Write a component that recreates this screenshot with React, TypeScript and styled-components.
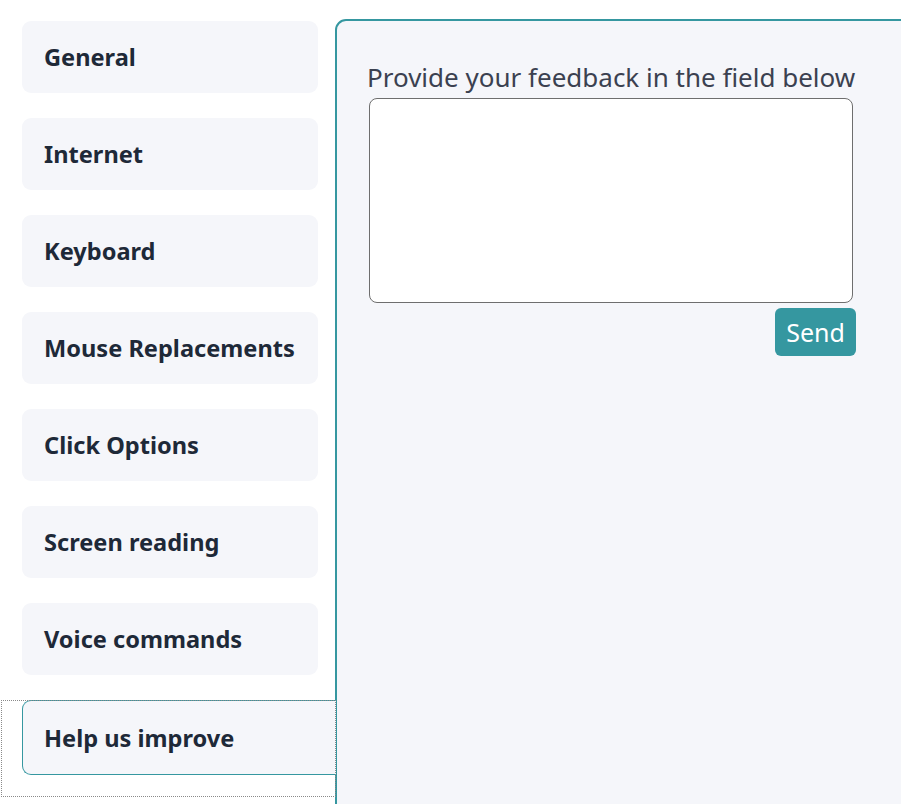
import React from "react";
import styled, { createGlobalStyle } from "styled-components";

const Global = createGlobalStyle`
  html, body { margin: 0; padding: 0; background: #ffffff; overflow: hidden; }
  body { font-family: "Noto Sans", "Open Sans", sans-serif; }
`;

const Page = styled.div`
  display: flex;
  align-items: flex-start;
  width: 901px;
  height: 804px;
  overflow: hidden;
`;

const Sidebar = styled.nav`
  display: flex;
  flex-direction: column;
  width: 335px;
  flex: 0 0 335px;
  padding: 21px 0 0 1px;
  position: relative;
  z-index: 1;
`;

const Item = styled.div<{ $active?: boolean }>`
  display: flex;
  padding: 0 ${(p) => (p.$active ? "0" : "18px")} ${(p) => (p.$active ? "22px" : "25px")} 21px;
  outline: ${(p) => (p.$active ? "1px dotted #8a8a8a" : "none")};
  outline-offset: -1px;
`;

const Tab = styled.button<{ $active?: boolean }>`
  flex: 1;
  height: ${(p) => (p.$active ? "75px" : "72px")};
  display: flex;
  align-items: center;
  padding: 0 0 0 21px;
  margin: 0;
  text-align: left;
  font-family: "Noto Sans", "Open Sans", sans-serif;
  font-weight: 700;
  font-size: 23.6px;
  color: #1e2938;
  background: #f5f6fa;
  border: 1px solid ${(p) => (p.$active ? "#3597a0" : "transparent")};
  border-right: ${(p) => (p.$active ? "none" : "1px solid transparent")};
  border-radius: ${(p) => (p.$active ? "9px 0 0 9px" : "9px")};
  cursor: pointer;
`;

const Panel = styled.section`
  flex: 1;
  margin: 19px -20px 0 -1px;
  height: 820px;
  background: #f5f6fa;
  border: 2px solid #3597a0;
  border-radius: 11px 0 0 0;
  padding: 40px 0 0 30px;
  box-sizing: border-box;
`;

const Content = styled.div`
  width: 489px;
  display: flex;
  flex-direction: column;
`;

const Label = styled.label`
  font-size: 26px;
  color: #3b4150;
  line-height: 33px;
  white-space: nowrap;
`;

const Area = styled.textarea`
  margin: 4px 3px 0 2px;
  height: 205px;
  box-sizing: border-box;
  background: #ffffff;
  border: 1px solid #6e6e6e;
  border-radius: 8px;
  resize: none;
  font-family: inherit;
`;

const Row = styled.div`
  display: flex;
  justify-content: flex-end;
  margin-top: 5px;
`;

const Send = styled.button`
  height: 48px;
  width: 81px;
  border: none;
  border-radius: 6px;
  background: #3597a0;
  color: #ffffff;
  font-family: "Noto Sans", "Open Sans", sans-serif;
  font-size: 25px;
  padding: 0;
  cursor: pointer;
`;

const tabs = [
  "General",
  "Internet",
  "Keyboard",
  "Mouse Replacements",
  "Click Options",
  "Screen reading",
  "Voice commands",
  "Help us improve",
];

export default function App() {
  return (
    <>
      <Global />
      <Page>
        <Sidebar>
          {tabs.map((t, i) => {
            const active = i === tabs.length - 1;
            return (
              <Item key={t} $active={active}>
                <Tab $active={active}>{t}</Tab>
              </Item>
            );
          })}
        </Sidebar>
        <Panel>
          <Content>
            <Label>Provide your feedback in the field below</Label>
            <Area />
            <Row>
              <Send>Send</Send>
            </Row>
          </Content>
        </Panel>
      </Page>
    </>
  );
}
